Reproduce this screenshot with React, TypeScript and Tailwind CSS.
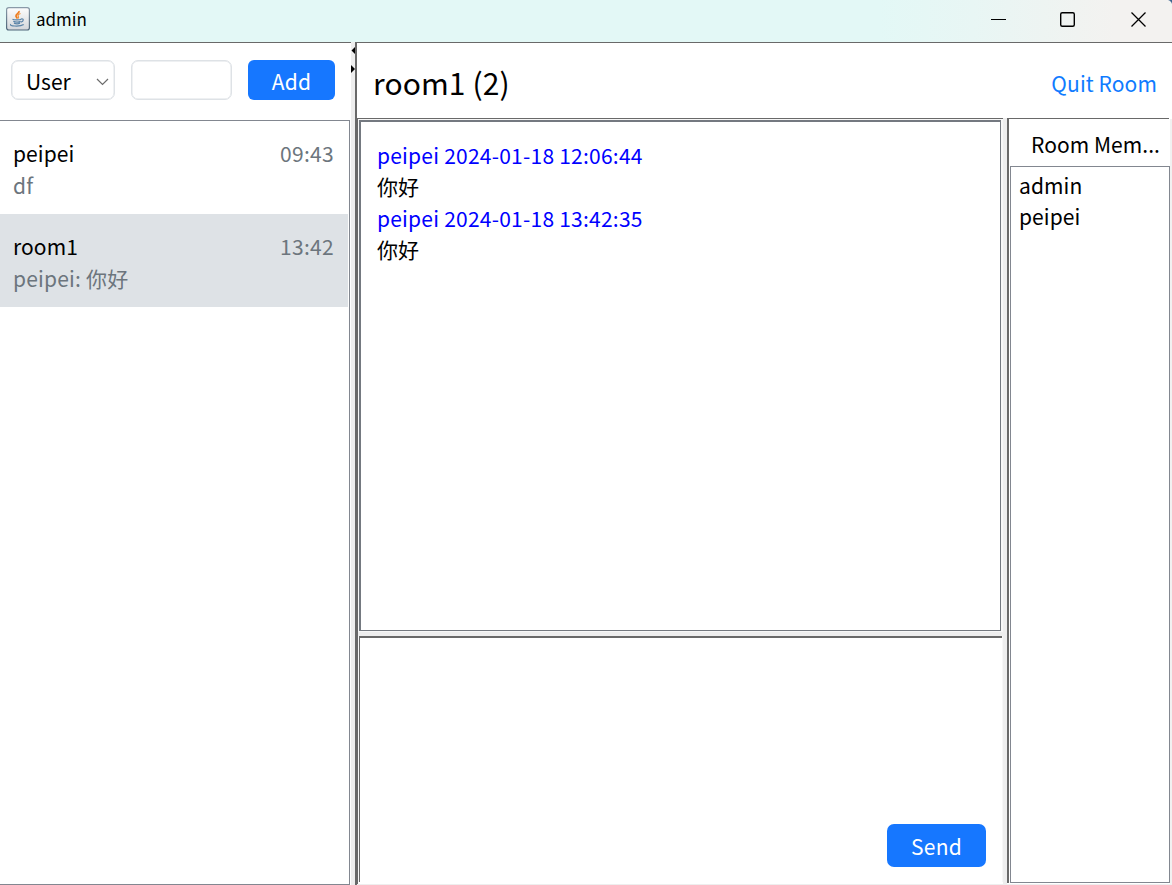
import React from "react";

type Chat = { name: string; time: string; last: string; active?: boolean };
type Message = { head: string; body: string };

const chats: Chat[] = [
  { name: "peipei", time: "09:43", last: "df" },
  { name: "room1", time: "13:42", last: "peipei: 你好", active: true },
];

const messages: Message[] = [
  { head: "peipei 2024-01-18 12:06:44", body: "你好" },
  { head: "peipei 2024-01-18 13:42:35", body: "你好" },
];

const members = ["admin", "peipei"];

function JavaIcon() {
  return (
    <svg width="24" height="24" viewBox="0 0 24 24" fill="none">
      <defs>
        <linearGradient id="tile" x1="0" y1="0" x2="0" y2="1">
          <stop offset="0" stopColor="#fdfdfd" />
          <stop offset="1" stopColor="#d3d6da" />
        </linearGradient>
        <linearGradient id="edge" x1="0" y1="0" x2="0" y2="1">
          <stop offset="0" stopColor="#8a9aa8" />
          <stop offset="1" stopColor="#4d6478" />
        </linearGradient>
      </defs>
      <rect x="0.6" y="0.6" width="22.8" height="22.4" rx="2.2" fill="url(#tile)" stroke="url(#edge)" strokeWidth="1.2" />
      <path d="M13 4c.8 2.3-3.6 3-3 5.200.2.9 1 1.500 1.500 2.300" stroke="#ee7a1c" strokeWidth="1.700" />
      <path d="M14.500 6.500c-2 .7-3 1.500-2.300 2.600.5.9.4 1.600-.4 2.400" stroke="#f0903a" strokeWidth="1.300" />
      <path d="M6.500 12.200c1.500.9 7.500.8 8.700 0M7.300 14.300c2 .8 5.600.8 7.400 0M8 16.200c1.700.7 4.500.7 6 0" stroke="#5b84a8" strokeWidth="1.300" />
      <path d="M15 12c3-.7 3 2.200-.2 3.100M5 17.300c-3 1.800 9 2.700 12.700.2" stroke="#5b84a8" strokeWidth="1.200" />
    </svg>
  );
}

function TitleBar() {
  return (
    <header className="relative flex h-[42px] shrink-0 items-center bg-[linear-gradient(90deg,#e3f8f6_0%,#e3f8f6_75%,#e8f6f4_83%,#f3f2f0_95%,#f3f2f0_100%)]">
      <div className="-mt-[5px] ml-[6px] flex items-center gap-1.5">
        <JavaIcon />
        <span className="pt-px text-[17px] leading-6">admin</span>
      </div>
      <div className="-mt-[5px] ml-auto flex items-center pr-[18px]">
        <svg width="163" height="18" viewBox="0 0 163 18" fill="none" stroke="#000" strokeWidth="1.300">
          <path d="M0 9.500h15" strokeWidth="1" />
          <rect x="69.700" y="2.700" width="13.600" height="13.600" rx="1.500" strokeWidth="1.400" />
          <path d="M140.500 2.500l14 14M154.500 2.500l-14 14" />
        </svg>
      </div>
      <svg className="absolute top-0 right-0" width="5" height="4">
        <path d="M1 0h4v4C4.500 2 3 .6 1 0z" fill="#3e6690" />
      </svg>
    </header>
  );
}

function Sidebar() {
  return (
    <aside className="flex w-[351px] shrink-0 flex-col border-t border-[#696969] bg-white pr-px">
      <div className="flex h-[77px] shrink-0 items-start pt-[17px] pl-[11px]">
        <div className="flex h-10 w-[104px] items-center justify-between rounded-[7px] border border-[#dee2e6] pr-[5px] pl-[14px] shadow-[inset_0_0_0_0.500px_#dee2e6]">
          <span className="pt-0.5">User</span>
          <svg className="mt-[3px]" width="13" height="8" viewBox="0 0 13 8" fill="none" stroke="#6c6c6c" strokeWidth="1.200">
            <path d="M1 1l5.500 5.500L12 1" />
          </svg>
        </div>
        <div className="ml-4 h-10 w-[101px] rounded-[7px] border border-[#dee2e6] shadow-[inset_0_0_0_0.500px_#dee2e6]" />
        <button className="ml-4 h-10 w-[87px] rounded-[6px] bg-[#1677ff] pt-0.5 tracking-[0.2px] text-white">Add</button>
      </div>
      <div className="min-h-0 flex-1 border-t border-r border-b border-[#828790] pr-px">
        {chats.map((chat) => (
          <div
            key={chat.name}
            className={
              chat.active
                ? "h-[93px] bg-[#dee2e6] pt-[17px] pr-[14px] pl-[13px]"
                : "h-[93px] bg-white pt-[17px] pr-[14px] pl-[13px]"
            }
          >
            <div className="flex h-8 justify-between">
              <span className="tracking-[0.1px]">{chat.name}</span>
              <span className="tracking-[0.3px] text-[#6c757d]">{chat.time}</span>
            </div>
            <div className="tracking-[0.2px] text-[#6c757d]">{chat.last}</div>
          </div>
        ))}
      </div>
    </aside>
  );
}

function SplitHandle() {
  return (
    <div className="flex w-1 shrink-0 flex-col bg-[#eeeeee] pt-[5px]">
      <svg width="4" height="26" viewBox="0 0 4 26">
        <path d="M4 0v7L.5 3.500z" />
        <path d="M0 18v8l4-4z" />
      </svg>
    </div>
  );
}

function Conversation() {
  return (
    <section className="flex w-[645px] shrink-0 flex-col bg-[#f7f7f7]">
      <div className="mt-px mr-px ml-px h-[511px] w-[642px] shrink-0 border-t-2 border-r border-b border-l-2 border-[#747980] bg-white pt-[18px] pl-4">
        {messages.map((m) => (
          <div key={m.head} className="h-[63px] leading-[31px]">
            <div className="h-[31px] tracking-[0.230px] text-[#0000ff]">{m.head}</div>
            <div>{m.body}</div>
          </div>
        ))}
      </div>
      <div className="mt-px h-1 shrink-0 bg-[#eeeeee]" />
      <div className="ml-px flex h-[246px] w-[643px] items-end justify-end border-t-2 border-l border-[#696969] bg-white pr-4 pb-[15px]">
        <button className="h-[43px] w-[99px] rounded-[7px] bg-[#1677ff] pt-0.5 tracking-[0.2px] text-white">Send</button>
      </div>
      <div className="h-[2px] bg-white" />
    </section>
  );
}

function Members() {
  return (
    <aside className="flex h-[764px] w-[163px] shrink-0 flex-col border-l-2 border-[#696969] bg-white">
      <div className="h-[47px] shrink-0 pt-[10px] pl-[22px] tracking-[0.050px]">Room Mem...</div>
      <ul className="ml-px h-[717px] w-[160px] border border-[#828790] pt-[3px] pl-2">
        {members.map((m) => (
          <li key={m} className="h-[31px] tracking-[0.1px]">
            {m}
          </li>
        ))}
      </ul>
    </aside>
  );
}

export default function App() {
  return (
    <div className="flex h-[885px] w-[1172px] flex-col overflow-hidden bg-white font-['Noto_Sans_CJK_SC',sans-serif] text-[21px] leading-[31px] text-black">
      <TitleBar />
      <div className="flex min-h-0 flex-1">
        <Sidebar />
        <SplitHandle />
        <div className="w-0.5 shrink-0 bg-[#696969]" />
        <main className="flex min-w-0 flex-1 flex-col border-t border-[#696969]">
          <div className="flex h-[75px] shrink-0 items-center justify-between pr-[15px] pl-4">
            <h1 className="pt-[2px] text-[30px] leading-10 tracking-[0.1px]">room1 (2)</h1>
            <span className="pt-[5px] tracking-[0.1px] text-[#0f7bff]">Quit Room</span>
          </div>
          <div className="flex h-px shrink-0">
            <div className="w-[646px] bg-[#696969]" />
            <div className="w-1 bg-[#eeeeee]" />
            <div className="w-[162px] bg-[#696969]" />
          </div>
          <div className="flex h-[765px] shrink-0">
            <div className="w-px shrink-0 bg-[#696969]" />
            <Conversation />
            <div className="w-1 shrink-0 bg-[#eeeeee]" />
            <Members />
            <div className="w-0.5 bg-[#f1f1f1]" />
          </div>
          <div className="h-px shrink-0 bg-[#eeeeee]" />
        </main>
      </div>
    </div>
  );
}
